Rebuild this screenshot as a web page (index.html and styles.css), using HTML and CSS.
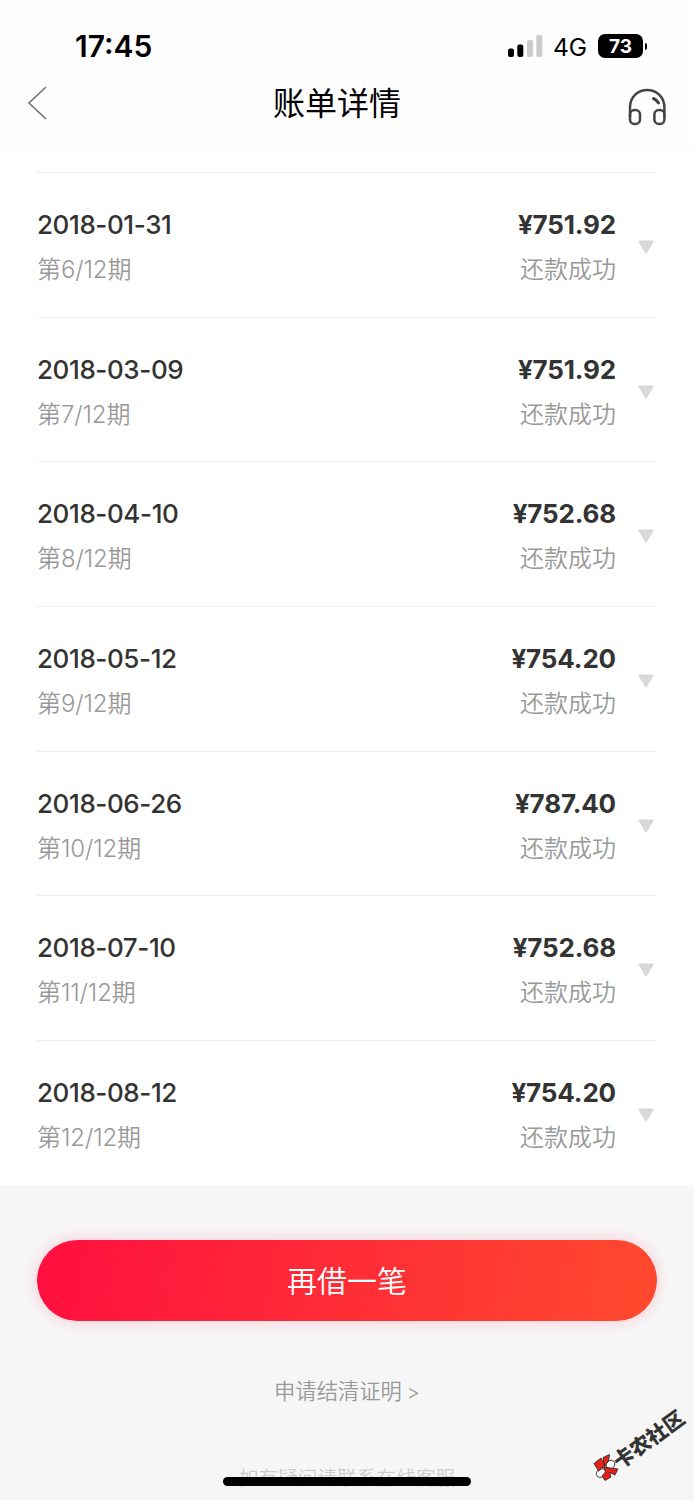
FILE: index.html
```
<!DOCTYPE html>
<html lang="zh-CN">
<head>
    <meta charset="UTF-8">
    <meta name="viewport" content="width=device-width, initial-scale=1.0">
    <title>账单详情</title>
    <link rel="stylesheet" href="styles.css">
</head>
<body>
    <header class="header">
        <div class="status-bar">
            <span class="time">17:45</span>
            <div class="status-icons">
                <svg class="signal" width="35" height="22" viewBox="0 0 35 22">
                    <rect x="0" y="13.5" width="6" height="8.5" rx="2"/>
                    <rect x="9.3" y="9.5" width="6" height="12.5" rx="2"/>
                    <rect x="19" y="5" width="6" height="17" rx="2" fill="#ccc"/>
                    <rect x="28.3" y="0" width="6" height="22" rx="2" fill="#ccc"/>
                </svg>
                <span class="network">4G</span>
                <span class="battery">73</span>
                <span class="battery-tip"></span>
            </div>
        </div>
        <nav class="nav-bar">
            <svg class="back" width="20" height="36" viewBox="0 0 20 36" fill="none" stroke="#777" stroke-width="1.7">
                <path d="M19 2 L2 18 L19 34"/>
            </svg>
            <h1>账单详情</h1>
            <svg class="service" width="38" height="38" viewBox="0 0 38 38" fill="none" stroke="#444" stroke-width="2.5">
                <path d="M2 29 V19.5 C2 9.2 9.6 2 19.2 2 C28.8 2 36.4 9.2 36.4 19.5 V29"/>
                <rect x="2" y="22" width="10" height="14" rx="4.5"/>
                <rect x="26.4" y="22" width="10" height="14" rx="4.5"/>
                <path d="M25.5 10.5 Q28.5 11.8 30.5 15" stroke-width="3" stroke-linecap="round"/>
            </svg>
        </nav>
    </header>

    <ul class="bill-list">
        <li class="bill">
            <div class="bill-info"><p class="date">2018-01-31</p><p class="period">第6/12期</p></div>
            <div class="bill-pay"><p class="amount">¥751.92</p><p class="state">还款成功</p></div>
            <svg class="arrow" viewBox="0 0 16 14"><path d="M1.5 1.5 H14.5 L8 12.5 Z"/></svg>
        </li>
        <li class="bill">
            <div class="bill-info"><p class="date">2018-03-09</p><p class="period">第7/12期</p></div>
            <div class="bill-pay"><p class="amount">¥751.92</p><p class="state">还款成功</p></div>
            <svg class="arrow" viewBox="0 0 16 14"><path d="M1.5 1.5 H14.5 L8 12.5 Z"/></svg>
        </li>
        <li class="bill">
            <div class="bill-info"><p class="date">2018-04-10</p><p class="period">第8/12期</p></div>
            <div class="bill-pay"><p class="amount">¥752.68</p><p class="state">还款成功</p></div>
            <svg class="arrow" viewBox="0 0 16 14"><path d="M1.5 1.5 H14.5 L8 12.5 Z"/></svg>
        </li>
        <li class="bill">
            <div class="bill-info"><p class="date">2018-05-12</p><p class="period">第9/12期</p></div>
            <div class="bill-pay"><p class="amount">¥754.20</p><p class="state">还款成功</p></div>
            <svg class="arrow" viewBox="0 0 16 14"><path d="M1.5 1.5 H14.5 L8 12.5 Z"/></svg>
        </li>
        <li class="bill">
            <div class="bill-info"><p class="date">2018-06-26</p><p class="period">第10/12期</p></div>
            <div class="bill-pay"><p class="amount">¥787.40</p><p class="state">还款成功</p></div>
            <svg class="arrow" viewBox="0 0 16 14"><path d="M1.5 1.5 H14.5 L8 12.5 Z"/></svg>
        </li>
        <li class="bill">
            <div class="bill-info"><p class="date">2018-07-10</p><p class="period">第11/12期</p></div>
            <div class="bill-pay"><p class="amount">¥752.68</p><p class="state">还款成功</p></div>
            <svg class="arrow" viewBox="0 0 16 14"><path d="M1.5 1.5 H14.5 L8 12.5 Z"/></svg>
        </li>
        <li class="bill">
            <div class="bill-info"><p class="date">2018-08-12</p><p class="period">第12/12期</p></div>
            <div class="bill-pay"><p class="amount">¥754.20</p><p class="state">还款成功</p></div>
            <svg class="arrow" viewBox="0 0 16 14"><path d="M1.5 1.5 H14.5 L8 12.5 Z"/></svg>
        </li>
    </ul>

    <footer class="footer">
        <button class="borrow" type="button">再借一笔</button>
        <a class="proof">申请结清证明 <span>&gt;</span></a>
        <p class="help">如有疑问请联系在线客服</p>
    </footer>

    <div class="home-indicator"></div>

    <div class="watermark">
        <svg class="watermark-logo" width="28" height="28" viewBox="0 0 28 28" stroke="#222" stroke-width="0.8">
            <ellipse cx="17.5" cy="10.5" rx="4.5" ry="4" fill="#fff" transform="rotate(-35 17.5 10.5)"/>
            <ellipse cx="8" cy="19" rx="5" ry="4" fill="#fff" transform="rotate(-35 8 19)"/>
            <path d="M1 9.5 L8 4 L12.5 12 L5.5 17 Z" fill="#e2231a"/>
            <path d="M10 3.5 L16.5 0.5 L15.5 7 L11.5 12 Z" fill="#e2231a"/>
            <path d="M11 13 L17 14 L25 15 L22 21 L16.5 18.5 L18 23 L12 26.5 L9 22 L12.5 18 Z" fill="#e2231a"/>
        </svg>
        <span class="watermark-text">卡农社区</span>
    </div>
</body>
</html>
```

FILE: styles.css
```
* {
    box-sizing: border-box;
    margin: 0;
    padding: 0;
}
body {
    position: relative;
    height: 1500px;
    overflow: hidden;
    background: #f6f6f6;
    color: #333;
    font-family: Inter, "Noto Sans CJK SC", sans-serif;
}
.header {
    height: 147px;
    background: #fefefe;
    border-bottom: 1px solid #f7f7f7;
}
.status-bar {
    display: flex;
    justify-content: space-between;
    height: 66px;
    padding: 26px 47px 0 75px;
    color: #000;
}
.time {
    font-size: 30px;
    font-weight: 600;
    line-height: 40px;
}
.status-icons {
    display: flex;
    align-items: center;
    height: 40px;
}
.network {
    width: 34px;
    margin: 2px 11px 0 10px;
    font-size: 24.5px;
    line-height: 30px;
    white-space: nowrap;
}
.battery {
    width: 45px;
    height: 24px;
    border-radius: 7px;
    background: #000;
    color: #fff;
    font-size: 19px;
    font-weight: 700;
    line-height: 25px;
    text-align: center;
}
.battery-tip {
    width: 2px;
    height: 7px;
    margin-left: 2px;
    border-radius: 0 2px 2px 0;
    background: #000;
}
.nav-bar {
    display: flex;
    align-items: center;
    justify-content: space-between;
    height: 74px;
    padding: 0 28px 0 27px;
}
.nav-bar h1 {
    margin: 1px 1px 0 0;
    color: #000;
    font-size: 32px;
    font-weight: 400;
    line-height: 48px;
}
.service {
    margin-top: 7px;
}
.bill-list {
    padding: 25px 37px 0 36px;
    background: #fff;
    list-style: none;
}
.bill {
    display: flex;
    height: 144.7px;
    padding: 34px 3px 0 1px;
    border-top: 1px solid #eee;
}
.bill-info {
    flex: 1;
}
.bill-pay {
    margin-right: 22px;
    text-align: right;
}
.date, .amount {
    height: 36px;
    font-size: 26px;
    line-height: 36px;
}
.date {
    font-weight: 500;
    letter-spacing: -0.4px;
}
.amount {
    font-weight: 700;
    letter-spacing: -0.15px;
}
.period, .state {
    height: 36px;
    margin-top: 8px;
    color: #999;
    font-size: 24px;
    font-weight: 350;
    line-height: 37px;
}
.period {
    letter-spacing: -0.1px;
}
.arrow {
    width: 16px;
    height: 14px;
    margin-top: 33px;
    fill: #d8d8d8;
    stroke: #d8d8d8;
    stroke-width: 2;
    stroke-linejoin: round;
}
.footer {
    display: flex;
    flex-direction: column;
    align-items: center;
    padding: 55px 37px 0;
}
.borrow {
    width: 620px;
    height: 81px;
    padding-top: 2px;
    border: 0;
    border-radius: 41px;
    background: linear-gradient(100deg, #ff0f3f, #ff4a2d);
    box-shadow: 0 0 16px rgba(255, 20, 80, 0.2);
    color: #fff;
    font-family: inherit;
    font-size: 30px;
    font-weight: 350;
    line-height: 79px;
}
.proof {
    margin-top: 54px;
    color: #999;
    font-size: 21.3px;
    font-weight: 350;
    line-height: 32px;
}
.proof span {
    margin-left: -1px;
    font-size: 20px;
}
.help {
    margin-top: 55px;
    color: #ccc;
    font-size: 19.7px;
    font-weight: 350;
    line-height: 30px;
    white-space: nowrap;
}
.home-indicator {
    position: absolute;
    top: 1477px;
    left: 223px;
    width: 248px;
    height: 9px;
    border-radius: 5px;
    background: #000;
}
.watermark {
    position: absolute;
    top: 1405px;
    left: 593px;
    width: 95px;
    height: 80px;
}
.watermark-logo {
    position: absolute;
    left: 0;
    bottom: 3px;
}
.watermark-text {
    position: absolute;
    top: 20px;
    left: 15px;
    color: #333;
    font-size: 20.5px;
    font-weight: 900;
    line-height: 30px;
    white-space: nowrap;
    transform: rotate(-36deg);
}
```
